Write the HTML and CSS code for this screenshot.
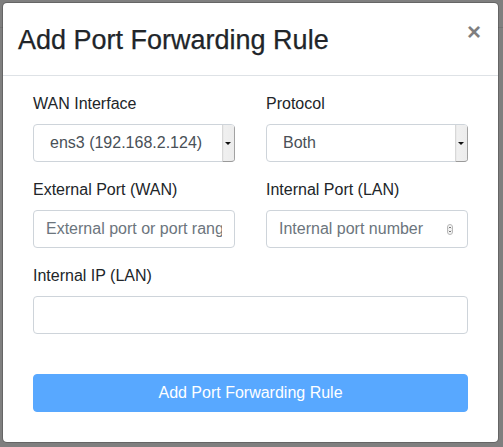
FILE: index.html
```html
<!DOCTYPE html>
<html lang="en">
<head>
<meta charset="utf-8">
<title>Add Port Forwarding Rule</title>
<link rel="stylesheet" href="styles.css">
</head>
<body>
  <div class="modal">
    <div class="modal-header">
      <h3 class="modal-title">Add Port Forwarding Rule</h3>
      <button class="close" type="button" aria-label="Close">×</button>
    </div>
    <div class="modal-body">
      <form class="form">
        <div class="form-group">
          <label class="label">WAN Interface</label>
          <div class="select">
            <span class="select-value">ens3 (192.168.2.124)</span>
            <span class="select-arrow"><span class="tri"></span></span>
          </div>
        </div>
        <div class="form-group">
          <label class="label">Protocol</label>
          <div class="select">
            <span class="select-value">Both</span>
            <span class="select-arrow"><span class="tri"></span></span>
          </div>
        </div>
        <div class="form-group">
          <label class="label">External Port (WAN)</label>
          <div class="input">
            <span class="placeholder">External port or port range</span>
          </div>
        </div>
        <div class="form-group">
          <label class="label">Internal Port (LAN)</label>
          <div class="input">
            <span class="placeholder">Internal port number</span>
            <span class="spinner">
              <svg width="6" height="11" viewBox="0 0 6 11"><rect x="0.5" y="0.5" width="5" height="10" rx="2.5" fill="#f4f4f4" stroke="#b8b8b8" stroke-width="1"/><path d="M1.8 4.2 L3 3 L4.2 4.2 M1.8 6.8 L3 8 L4.2 6.8" fill="none" stroke="#555" stroke-width="0.8"/></svg>
            </span>
          </div>
        </div>
        <div class="form-group full">
          <label class="label">Internal IP (LAN)</label>
          <div class="input"></div>
        </div>
        <button class="btn" type="button" disabled>Add Port Forwarding Rule</button>
      </form>
    </div>
  </div>
</body>
</html>
```

FILE: styles.css
```css
* { box-sizing: border-box; }

html, body {
  margin: 0;
  padding: 0;
}

body {
  width: 503px;
  height: 447px;
  overflow: hidden;
  font-family: "Liberation Sans", Arial, Helvetica, sans-serif;
  background: linear-gradient(to bottom, #7f7f7f 0, #7f7f7f 27px, #737373 27px, #737373 28px, #7f7f7f 28px);
  padding: 2px 4px 4px 2px;
  color: #212529;
}

.modal {
  width: 497px;
  height: 441px;
  background: #fff;
  border: 1px solid rgba(0, 0, 0, 0.2);
  border-radius: 5px;
  background-clip: padding-box;
  display: flex;
  flex-direction: column;
}

.modal-header {
  display: flex;
  align-items: flex-start;
  padding: 21px 15px 19px 15px;
  border-bottom: 1px solid #dee2e6;
}

.modal-title {
  margin: 0;
  font-size: 27px;
  line-height: 32px;
  font-weight: 500;
  color: #212529;
  flex: 1;
  -webkit-text-stroke: 0.25px #212529;
}

.close {
  border: 0;
  background: transparent;
  padding: 0 2px;
  margin: -4px 0 0 0;
  font-family: "Liberation Sans", Arial, sans-serif;
  font-size: 24px;
  font-weight: 700;
  line-height: 24px;
  color: #000;
  opacity: 0.5;
  text-shadow: 0 1px 0 #fff;
}

.modal-body {
  padding: 16px 30px 30px 30px;
}

.form {
  display: grid;
  grid-template-columns: minmax(0, 1fr) minmax(0, 1fr);
  column-gap: 31px;
}

.form-group {
  margin-bottom: 16px;
  display: flex;
  flex-direction: column;
  min-width: 0;
}

.form-group.full {
  grid-column: 1 / -1;
}

.label {
  font-size: 16px;
  line-height: 24px;
  margin-bottom: 8px;
  color: #212529;
}

.select,
.input {
  height: 38px;
  border: 1px solid #ced4da;
  border-radius: 4px;
  background: #fff;
  display: flex;
  align-items: center;
  font-size: 16px;
  line-height: 24px;
  color: #495057;
  min-width: 0;
}

.select-value {
  flex: 1;
  min-width: 0;
  padding-left: 16px;
  white-space: nowrap;
  overflow: hidden;
}

.select-arrow {
  align-self: stretch;
  flex: none;
  width: 13px;
  margin: 0 -1px -1px 0;
  background: linear-gradient(to right, #e4e4e4 0, #f0f0f0 1px, #ececec 11px, #a8a8a8 11px, #8e8e8e 13px);
  border-bottom: 1px solid #9a9a9a;
  border-left: 1px solid #d8d8d8;
  border-radius: 0 4px 4px 0;
  display: flex;
  align-items: center;
  justify-content: center;
  padding-right: 2px;
}

.tri {
  width: 0;
  height: 0;
  border-left: 3px solid transparent;
  border-right: 3px solid transparent;
  border-top: 3px solid #111;
}

.input {
  padding: 0 12px;
  overflow: hidden;
}

.placeholder {
  flex: 1;
  min-width: 0;
  color: #6c757d;
  white-space: nowrap;
  overflow: hidden;
}

.spinner {
  display: flex;
  flex: none;
  margin-left: 6px;
  margin-right: 2px;
}

.btn {
  grid-column: 1 / -1;
  margin-top: 24px;
  height: 38px;
  border: 1px solid #007bff;
  border-radius: 4px;
  background: #007bff;
  opacity: 0.65;
  color: #fff;
  font-family: "Liberation Sans", Arial, sans-serif;
  font-size: 16px;
  line-height: 24px;
  padding: 6px 12px;
}
```
